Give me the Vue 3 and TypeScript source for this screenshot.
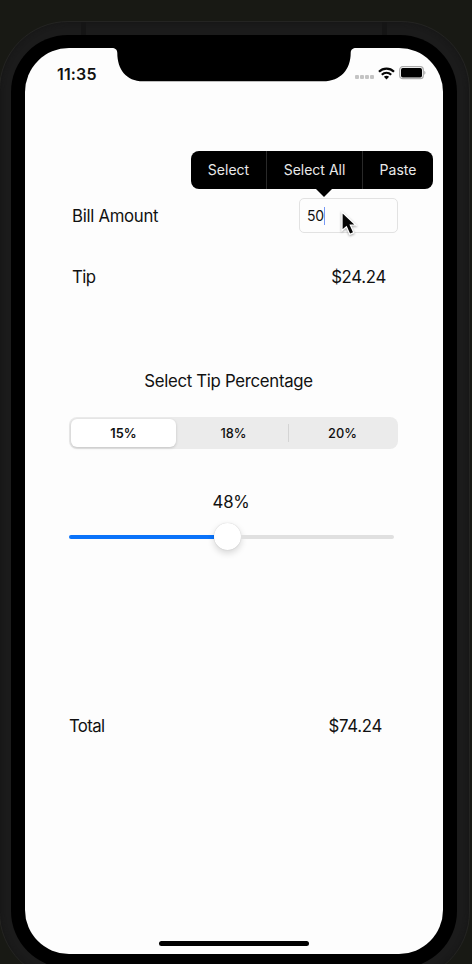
<script setup lang="ts">
import { computed, ref } from 'vue'

const bill = ref(50)
const tip = ref(24.24)
const percent = ref(48)
const selected = ref(0)
const presets: string[] = ['15%', '18%', '20%']
const actions: string[] = ['Select', 'Select All', 'Paste']

const money = (n: number): string => `$${n.toFixed(2)}`
const total = computed(() => money(bill.value + tip.value))
const thumbOffset = computed(() => `${(percent.value / 100) * 298 + 2}px`)
</script>

<template>
  <div class="stage">
    <div class="frame">
      <i class="band band-left"></i>
      <i class="band band-right"></i>
      <div class="bezel">
        <main class="screen">
          <svg class="notch" width="244" height="34" viewBox="0 0 244 34" aria-hidden="true">
            <path d="M0 0V0C3 0 5.3 1.4 5.3 5C5.3 21 14 33.3 31 33.3H211C229 33.3 238.7 21 238.7 5C238.7 1.4 241 0 244 0Z" />
          </svg>

          <header class="status">
            <span class="clock">11:35</span>
            <div class="indicators">
              <span class="cell"><i v-for="n in 4" :key="n"></i></span>
              <svg class="wifi" width="17" height="13" viewBox="0 0 17 13" aria-hidden="true">
                <g fill="none" stroke="#050505" stroke-width="2.2">
                  <path d="M1 4.7C5.2 .5 11.8 .5 16 4.7" />
                  <path d="M3.8 7.7C6.5 5.1 10.5 5.1 13.2 7.7" />
                </g>
                <path d="M5.9 9.8C7.4 8.5 9.6 8.5 11.1 9.8L8.5 12.4Z" fill="#050505" />
              </svg>
              <svg class="battery" width="27" height="14" viewBox="0 0 27 14" aria-hidden="true">
                <rect x=".7" y=".7" width="23.6" height="12" rx="3" fill="#fff" stroke="#ababab" stroke-width="1.2" />
                <rect x="2" y="2" width="21" height="9.4" rx="1.7" fill="#000" />
                <path d="M25.3 4.7C26.8 5.2 26.8 8.2 25.3 8.7Z" fill="#a5a5a5" />
              </svg>
            </div>
          </header>

          <section class="row bill">
            <span class="bill-label">Bill Amount</span>
            <div class="field">
              <span class="amount">{{ bill }}</span><i class="caret"></i>
              <div class="menu">
                <span v-for="a in actions" :key="a">{{ a }}</span>
              </div>
              <svg class="pointer" width="18" height="28" viewBox="0 0 18 28" aria-hidden="true">
                <path d="M2 2V20.5L6.4 16.7L9.8 24.4L13.8 22.6L10.4 15.2H16Z" fill="#050505" stroke="#fff" stroke-width="1.3" />
              </svg>
            </div>
          </section>

          <section class="row tip">
            <span class="tip-label">Tip</span>
            <span class="value">{{ money(tip) }}</span>
          </section>

          <h1>Select Tip Percentage</h1>

          <div class="segments">
            <button v-for="(p, i) in presets" :key="p" :class="{ active: i === selected }" @click="selected = i">{{ p }}</button>
          </div>

          <div class="percent">{{ percent }}%</div>
          <div class="slider">
            <div class="filled" :style="{ width: thumbOffset }"></div>
            <i class="thumb"></i>
            <div class="rest"></div>
          </div>

          <section class="row total">
            <span class="total-label">Total</span>
            <span class="value">{{ total }}</span>
          </section>

          <div class="home"></div>
        </main>
      </div>
    </div>
  </div>
</template>

<style>
body { margin: 0; background: #181914; }
</style>

<style scoped>
* { box-sizing: border-box; }
.stage {
  width: 472px;
  height: 964px;
  overflow: hidden;
  padding-top: 21px;
  background: #181914;
  font-family: Inter, "Liberation Sans", sans-serif;
  color: #111;
}
.frame {
  position: relative;
  width: 471px;
  height: 960px;
  margin-left: -1px;
  padding: 13px 13px 14px 12px;
  border: 1px solid #242422;
  border-radius: 69px;
  background: #1b1b1b;
  box-shadow: inset 0 0 5px #151515;
}
.band { position: absolute; top: 0; width: 5px; height: 13px; background: #151515; }
.band-left { left: 81px; }
.band-right { left: 382px; }
.bezel {
  width: 446px;
  height: 933px;
  margin-left: -1px;
  padding: 13px 14px;
  border-radius: 57px;
  background: #000;
}
.screen {
  position: relative;
  display: flex;
  flex-direction: column;
  width: 418px;
  height: 906px;
  border-radius: 44px;
  background: #fdfdfd;
  font-size: 16.8px;
  line-height: 20px;
}
.notch { position: absolute; left: 87px; top: 0; }
.status {
  display: flex;
  justify-content: space-between;
  height: 50px;
  padding: 15px 17px 0 32px;
}
.clock { margin-top: 1px; font-size: 16px; font-weight: 600; letter-spacing: .15px; }
.indicators { display: flex; height: 20px; align-items: center; }
.cell { display: flex; gap: 1px; margin: 8px 4px 0 0; }
.cell i { width: 4px; height: 4px; border-radius: 1px; background: #c4c4c4; }
.wifi { margin-right: 4px; }
.row { display: flex; justify-content: space-between; align-items: center; }
.bill { height: 36px; margin-top: 100px; padding: 0 45px 0 47px; }
.bill-label { letter-spacing: -.3px; }
.tip-label { letter-spacing: -.6px; }
.total-label { letter-spacing: -.65px; }
.value { letter-spacing: -.3px; }
.field {
  position: relative;
  top: -.5px;
  display: flex;
  align-items: center;
  width: 99px;
  height: 35px;
  padding-left: 7px;
  border: 1px solid #e2e2e2;
  border-radius: 5px;
}
.amount { font-size: 14px; letter-spacing: -.2px; }
.caret { width: 1.5px; height: 18px; background: #7799f5; }
.menu {
  position: absolute;
  left: -109px;
  top: -48px;
  display: grid;
  grid-template-columns: 75px 96px 71px;
  width: 242px;
  height: 38px;
  border-radius: 8px;
  background: #000;
  color: #e9e9e9;
  font-size: 14px;
  line-height: 38px;
  text-align: center;
}
.menu span + span { border-left: 1px solid #292929; }
.menu::after {
  content: "";
  position: absolute;
  left: 124px;
  top: 37px;
  width: 18px;
  height: 9px;
  background: #000;
  clip-path: polygon(0 0, 100% 0, 50% 100%);
}
.pointer { position: absolute; left: 40px; top: 11px; filter: drop-shadow(0 1px 1px rgba(0, 0, 0, .35)); }
.tip { height: 20px; margin-top: 33px; padding: 0 57px 0 47px; }
h1 {
  width: 329px;
  margin: 84px 0 0 39px;
  font-size: 16.8px;
  font-weight: 400;
  letter-spacing: -.3px;
  text-align: center;
}
.segments {
  display: grid;
  grid-template-columns: 107px 109px 109px;
  width: 329px;
  height: 32px;
  margin: 26px 0 0 44px;
  padding: 2px;
  border-radius: 8px;
  background: #ebebeb;
}
button {
  position: relative;
  padding: 0;
  border: 0;
  background: transparent;
  color: #111;
  font: 500 12.8px Inter, sans-serif;
}
button.active {
  margin-right: 2px;
  border-radius: 6px;
  background: #fff;
  box-shadow: 0 1px 3px rgba(0, 0, 0, .18);
  font-weight: 600;
}
button:nth-child(2) { left: 1px; }
button:last-child { left: 1px; }
button:last-child::before {
  content: "";
  position: absolute;
  left: 0;
  top: 5px;
  width: 1px;
  height: 18px;
  background: #d4d4d4;
}
.percent { width: 324px; margin: 43px 0 0 44px; text-align: center; letter-spacing: -.3px; }
.slider { display: flex; align-items: center; width: 325px; height: 28px; margin: 10px 0 0 44px; }
.filled { flex: none; height: 4px; margin-top: 2px; border-radius: 2px 0 0 2px; background: #0a73fa; }
.thumb {
  flex: none;
  width: 27px;
  height: 27px;
  border-radius: 50%;
  background: #fff;
  box-shadow: 0 3px 7px rgba(0, 0, 0, .16), 0 0 1px rgba(0, 0, 0, .22);
}
.rest { flex: 1; height: 4px; margin-top: 2px; border-radius: 0 2px 2px 0; background: #e0e0e0; }
.total { height: 20px; margin-top: 166px; padding: 0 61px 0 44px; }
.home { width: 150px; height: 5px; margin: auto 0 8px 134px; border-radius: 3px; background: #000; }
</style>
